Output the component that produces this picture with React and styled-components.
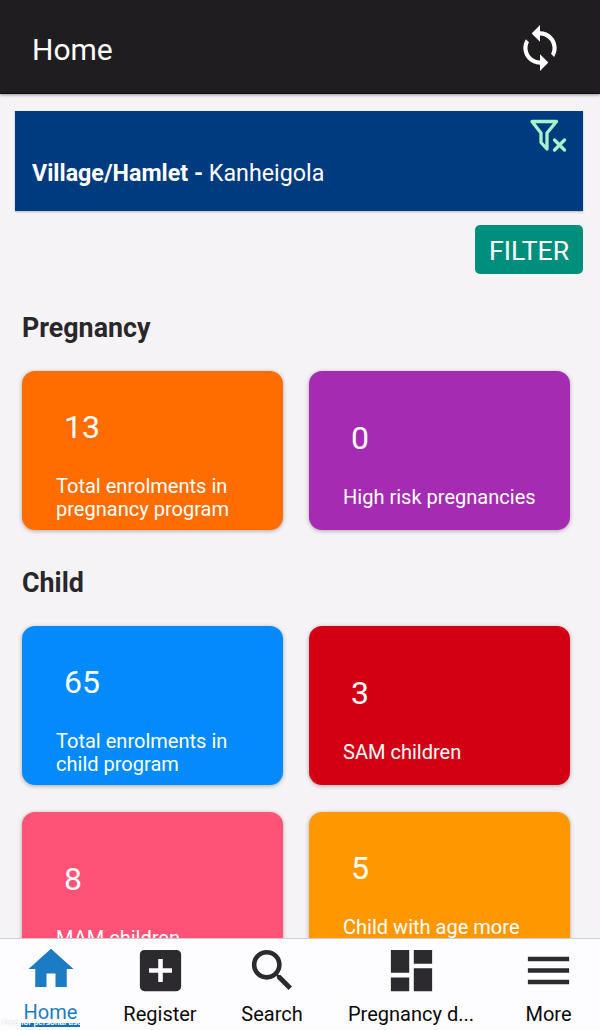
import React from "react";
import styled, { createGlobalStyle } from "styled-components";

const Global = createGlobalStyle`
  * { box-sizing: border-box; }
  body { margin: 0; background: #f5f3f6; font-family: Roboto, sans-serif; }
`;

const Screen = styled.div`
  position: relative;
  display: flex;
  flex-direction: column;
  width: 600px;
  height: 1030px;
  overflow: hidden;
  background: #f5f3f6;
`;

const AppBar = styled.header`
  flex: none;
  display: flex;
  align-items: center;
  justify-content: space-between;
  height: 94px;
  padding: 2px 35px 0 32px;
  background: #1f1d20;
  border-bottom: 1px solid #0d0b0e;
  box-shadow: 0 1px 3px rgba(0, 0, 0, 0.4);
  color: #fff;
`;

const Title = styled.h1`
  margin: 0;
  padding-top: 4px;
  font-size: 30px;
  font-weight: 400;
  line-height: 36px;
`;

const Glyph = styled.svg`
  display: block;
  flex: none;
  width: ${(p) => p.$size}px;
  height: ${(p) => p.$size}px;
  fill: currentColor;
`;

const Content = styled.main`
  flex: 1;
  min-height: 0;
  overflow: hidden;
  display: flex;
  flex-direction: column;
  padding: 17px 17px 0 15px;
`;

const FilterBanner = styled.section`
  flex: none;
  display: flex;
  flex-direction: column;
  height: 100px;
  padding: 7px 16px 0 17px;
  background: #003a7f;
  color: #fff;
  box-shadow: 0 1px 2px rgba(0, 0, 0, 0.25);
`;

const ClearFilter = styled.svg`
  align-self: flex-end;
  width: 38px;
  height: 36px;
  fill: none;
  stroke: #a9f3cb;
  stroke-width: 3.3;
  stroke-linejoin: round;
  stroke-linecap: round;
`;

const BannerText = styled.div`
  margin-top: 5px;
  font-size: 23.25px;
  line-height: 28px;
  white-space: nowrap;
`;

const FilterButton = styled.button`
  flex: none;
  align-self: flex-end;
  width: 108px;
  height: 49px;
  margin-top: 14px;
  padding: 2px 0 0;
  border: 0;
  border-radius: 5px;
  background: #008f7c;
  color: #fff;
  font: 400 26.6px/30px Roboto, sans-serif;
`;

const Section = styled.section`
  flex: none;
  margin-top: ${(p) => p.$top}px;
  padding-left: 7px;
`;

const SectionTitle = styled.h2`
  margin: 0 0 ${(p) => p.$gap}px;
  color: #29272b;
  font-size: 26.8px;
  font-weight: 700;
  line-height: 32px;
`;

const CardGrid = styled.div`
  display: grid;
  grid-template-columns: 261px 261px;
  gap: 27px 26px;
`;

const Card = styled.article`
  display: flex;
  flex-direction: column;
  height: 159px;
  padding: ${(p) => (p.$twoLine ? 36.5 : 48)}px 10px 0 34px;
  border-radius: 13px;
  background: ${(p) => p.$color};
  color: #fff;
  box-shadow: 0 1px 4px rgba(0, 0, 0, 0.32);
`;

const Count = styled.div`
  padding-left: 8px;
  font-size: 32px;
  line-height: 38px;
`;

const Label = styled.div`
  margin-top: 29px;
  font-size: 20.05px;
  line-height: 23.5px;
  white-space: pre-line;
`;

const BottomNav = styled.nav`
  flex: none;
  display: grid;
  grid-template-columns: 101px 118px 106px 172px 103px;
  height: 92.5px;
  border-top: 1px solid #cdcbd0;
  background: #fdfcfe;
`;

const NavItem = styled.a`
  display: flex;
  flex-direction: column;
  align-items: center;
  padding-top: ${(p) => (p.$active ? 3 : 4.5)}px;
  color: ${(p) => (p.$active ? "#1d7bc4" : "#2c2a2e")};
`;

const NavLabel = styled.span`
  margin-top: 4px;
  color: ${(p) => (p.$active ? "#1d7bc4" : "#0b0a0c")};
  font-size: 20px;
  line-height: 24px;
  white-space: nowrap;
`;

const Watermark = styled.div`
  position: absolute;
  left: 2px;
  bottom: 3px;
  display: flex;
  align-items: flex-end;
  height: 8px;
  color: #fff;
  font: 700 7.8px/8px "Liberation Sans", sans-serif;
  white-space: nowrap;
`;

const WatermarkLead = styled.span`
  width: 19px;
  text-shadow: 0 0 2px rgba(120, 90, 100, 0.35);
`;

const WatermarkRest = styled.span`
  width: 59px;
  background: linear-gradient(#1270bf, #1270bf) bottom / 100% 4px no-repeat;
`;

const PATHS = {
  sync: "M12 4V1L8 5l4 4V6c3.31 0 6 2.69 6 6 0 1.01-.25 1.97-.7 2.8l1.46 1.46C19.54 15.03 20 13.57 20 12c0-4.42-3.58-8-8-8zm0 14c-3.31 0-6-2.69-6-6 0-1.01.25-1.97.7-2.8L5.24 7.74C4.46 8.97 4 10.43 4 12c0 4.42 3.58 8 8 8v3l4-4-4-4v3z",
  home: "M10 20v-6h4v6h5v-8h3L12 3 2 12h3v8h5z",
  register:
    "M17 13h-4v4h-2v-4H7v-2h4V7h2v4h4v2zM19 3H5c-1.11 0-2 .89-2 2v14a2 2 0 0 0 2 2h14a2 2 0 0 0 2-2V5a2 2 0 0 0-2-2z",
  search:
    "M9.5 3A6.5 6.5 0 0 1 16 9.5c0 1.61-.59 3.09-1.56 4.23l.27.27h.79l5 5-1.5 1.5-5-5v-.79l-.27-.27A6.516 6.516 0 0 1 9.5 16a6.5 6.5 0 0 1 0-13m0 2C7 5 5 7 5 9.5S7 14 9.5 14 14 12 14 9.5 12 5 9.5 5z",
  dashboard: "M13 3v6h8V3m-8 18h8V11h-8M3 21h8v-6H3m0-2h8V3H3v10z",
  menu: "M3 6h18v2H3V6m0 5h18v2H3v-2m0 5h18v2H3v-2z",
};

const Icon = ({ name, size }) => (
  <Glyph viewBox="0 0 24 24" $size={size} aria-hidden="true">
    <path d={PATHS[name]} />
  </Glyph>
);

const sections = [
  {
    title: "Pregnancy",
    top: 37.5,
    gap: 27.5,
    cards: [
      { count: 13, label: "Total enrolments in\npregnancy program", color: "#ff6d00", twoLine: true },
      { count: 0, label: "High risk pregnancies", color: "#a52cb2" },
    ],
  },
  {
    title: "Child",
    top: 36.5,
    gap: 27.9,
    cards: [
      { count: 65, label: "Total enrolments in\nchild program", color: "#038bfe", twoLine: true },
      { count: 3, label: "SAM children", color: "#d30014" },
      { count: 8, label: "MAM children", color: "#ff5277" },
      { count: 5, label: "Child with age more\nthan 5 years", color: "#ff9800", twoLine: true },
    ],
  },
];

const tabs = [
  { icon: "home", label: "Home", active: true },
  { icon: "register", label: "Register" },
  { icon: "search", label: "Search" },
  { icon: "dashboard", label: "Pregnancy d..." },
  { icon: "menu", label: "More" },
];

export default function App() {
  return (
    <>
      <Global />
      <Screen>
        <AppBar>
          <Title>Home</Title>
          <Icon name="sync" size={50} />
        </AppBar>
        <Content>
          <FilterBanner>
            <ClearFilter viewBox="0 0 38 36" aria-label="Clear filter">
              <path d="M3 3.5h24.500l-9.500 11.500v16l-6-6.500v-9.500z" />
              <path d="M25.500 22l10 10M35.500 22l-10 10" />
            </ClearFilter>
            <BannerText>
              <b>Village/Hamlet - </b>Kanheigola
            </BannerText>
          </FilterBanner>
          <FilterButton>FILTER</FilterButton>
          {sections.map((s) => (
            <Section key={s.title} $top={s.top}>
              <SectionTitle $gap={s.gap}>{s.title}</SectionTitle>
              <CardGrid>
                {s.cards.map((c) => (
                  <Card key={c.label} $color={c.color} $twoLine={c.twoLine}>
                    <Count>{c.count}</Count>
                    <Label>{c.label}</Label>
                  </Card>
                ))}
              </CardGrid>
            </Section>
          ))}
        </Content>
        <BottomNav>
          {tabs.map((t) => (
            <NavItem key={t.label} $active={t.active}>
              <Icon name={t.icon} size={t.active ? 54 : 55} />
              <NavLabel $active={t.active}>{t.label}</NavLabel>
            </NavItem>
          ))}
        </BottomNav>
        <Watermark>
          <WatermarkLead>Free</WatermarkLead>
          <WatermarkRest>for personal use</WatermarkRest>
        </Watermark>
      </Screen>
    </>
  );
}
